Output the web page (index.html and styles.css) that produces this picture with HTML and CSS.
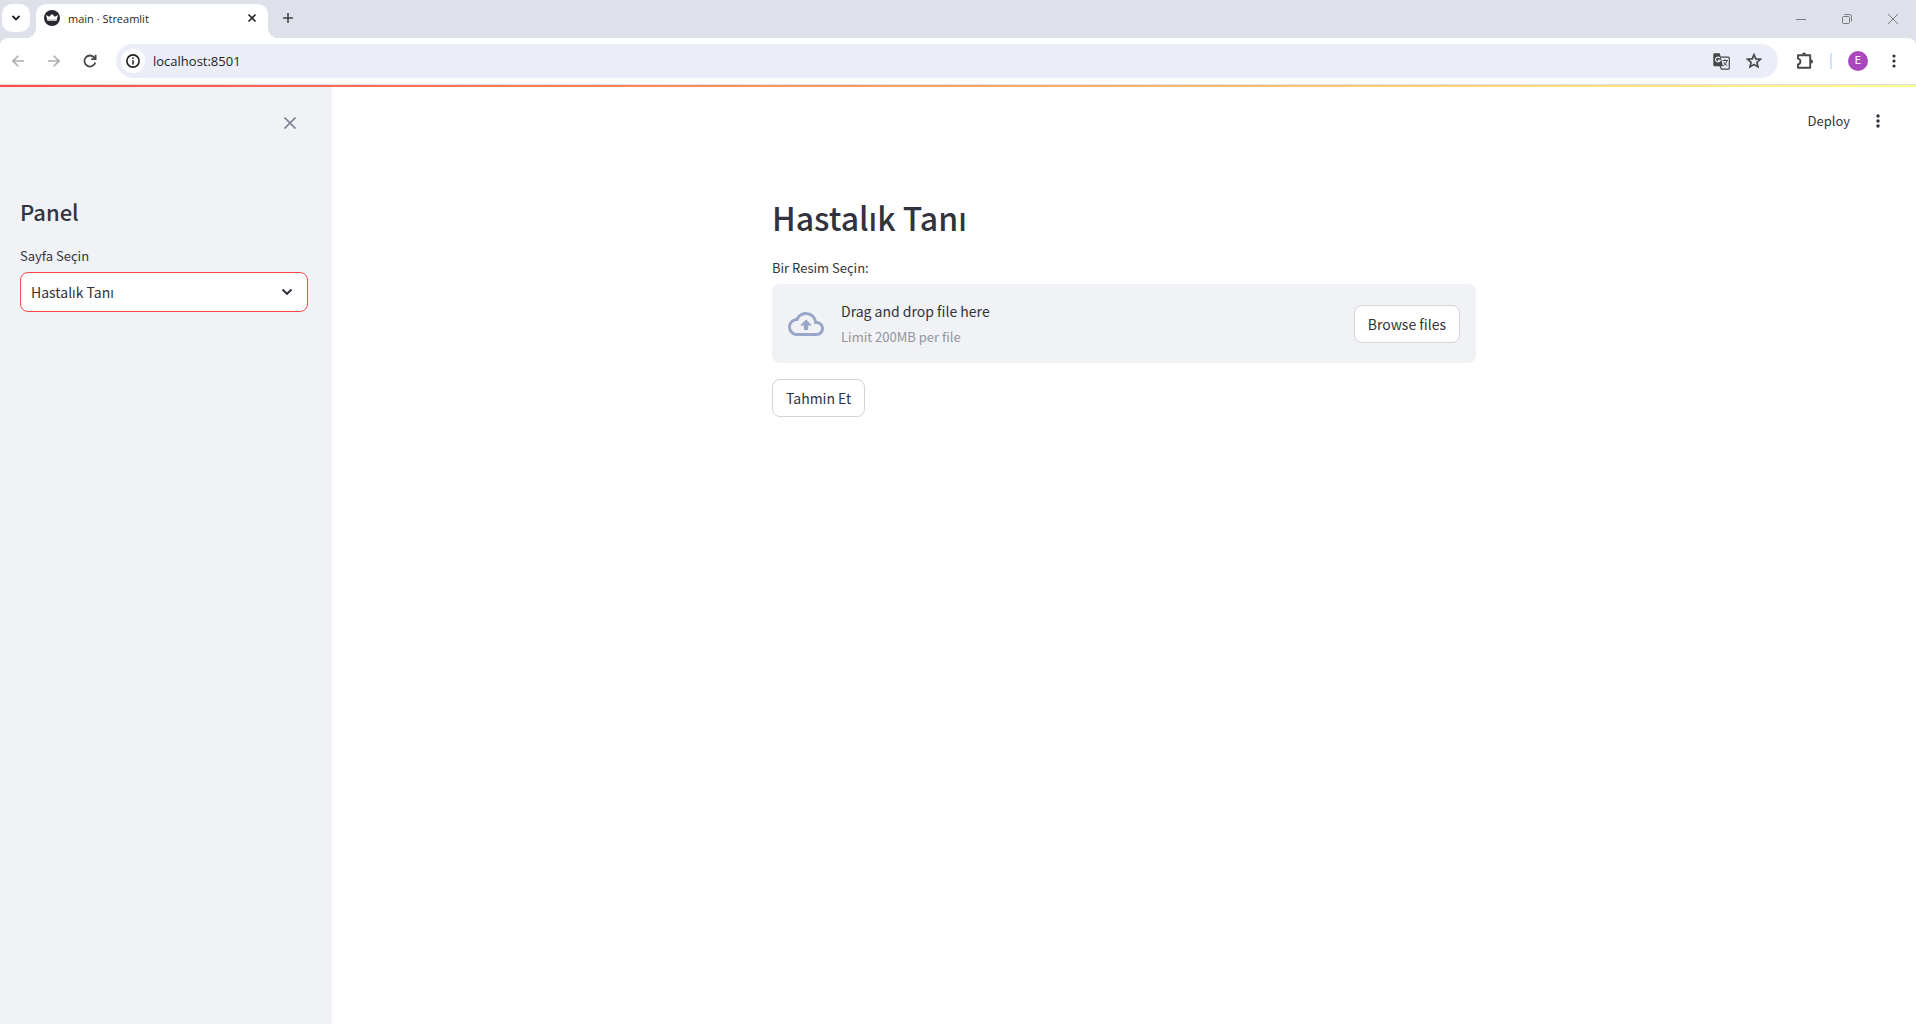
FILE: index.html
```html
<!DOCTYPE html>
<html lang="tr">
<head>
<meta charset="utf-8">
<title>main · Streamlit</title>
<link rel="stylesheet" href="styles.css">
</head>
<body>
<div class="browser">
  <div class="tab-strip">
    <button class="tab-search" aria-label="Search tabs">
      <svg width="10" height="10" viewBox="0 0 10 10"><path d="M1.500 3l3.500 3.500L8.500 3" fill="none" stroke="#1f1f1f" stroke-width="1.800"/></svg>
    </button>
    <div class="tab">
      <svg width="16" height="16" viewBox="0 0 16 16"><circle cx="8" cy="8" r="8" fill="#262730"/><path d="M2 5l3.200 1.700L8 4l2.800 2.700L14 5l-1.700 6H3.700z" fill="#fff"/><path d="M3.300 9.200h9.400l-.4 1.800H3.700z" fill="#c4c4c8"/></svg>
      <span class="tab-title">main · Streamlit</span>
      <button class="plain tab-close" aria-label="Close tab">
        <svg width="10" height="10" viewBox="0 0 10 10"><path d="M1.500 1.500l7 7M8.500 1.500l-7 7" stroke="#1f1f1f" stroke-width="1.600"/></svg>
      </button>
    </div>
    <button class="plain new-tab" aria-label="New tab">
      <svg width="12" height="12" viewBox="0 0 12 12"><path d="M6 1v10M1 6h10" stroke="#474747" stroke-width="1.600"/></svg>
    </button>
    <div class="window-controls">
      <button class="plain" aria-label="Minimize"><svg width="10" height="10" viewBox="0 0 10 10"><path d="M0 5.500h10" stroke="#777a7f"/></svg></button>
      <button class="plain" aria-label="Restore"><svg width="10" height="10" viewBox="0 0 10 10" fill="none" stroke="#777a7f"><rect x=".5" y="2.500" width="7" height="7" rx="1"/><path d="M2.500.5h5a2 2 0 0 1 2 2v5"/></svg></button>
      <button class="plain" aria-label="Close"><svg width="10" height="10" viewBox="0 0 10 10"><path d="M0 0l10 10M10 0L0 10" stroke="#777a7f"/></svg></button>
    </div>
  </div>
  <div class="toolbar-wrap">
  <div class="toolbar">
    <button class="plain nav" aria-label="Back"><svg width="12" height="12" viewBox="0 0 12 12" fill="none" stroke="#aeaeae" stroke-width="1.600"><path d="M12 6H1M6.300.700L1 6l5.300 5.300"/></svg></button>
    <button class="plain nav" aria-label="Forward"><svg width="12" height="12" viewBox="0 0 12 12" fill="none" stroke="#aeaeae" stroke-width="1.600"><path d="M0 6h11M5.700.700L11 6l-5.300 5.300"/></svg></button>
    <button class="plain nav" aria-label="Reload"><svg width="14" height="14" viewBox="0 0 14 14" fill="none" stroke="#474747" stroke-width="1.800"><path d="M12.300 8.400A5.500 5.500 0 1 1 11.300 3.600L12.500 5M12.600.7V5.200H8.200"/></svg></button>
    <div class="address">
      <button class="site-info" aria-label="View site information"><svg width="14" height="14" viewBox="0 0 14 14"><circle cx="7" cy="7" r="6.100" fill="none" stroke="#1f1f1f" stroke-width="1.600"/><path d="M7 6.200v4.300M7 3.500v1.500" stroke="#1f1f1f" stroke-width="1.500"/></svg></button>
      <input class="url" type="text" value="localhost:8501" aria-label="Address">
      <button class="plain" aria-label="Translate this page"><svg width="17" height="17" viewBox="0 0 17 17"><path d="M7 4.100h8.400a.9.900 0 0 1 .9.900v10.300a.9.900 0 0 1-.9.900H8.500L7 13" fill="none" stroke="#474747" stroke-width="1.200"/><path d="M1.300.2h5.500L10 13.200H1.300a1 1 0 0 1-1-1V1.200a1 1 0 0 1 1-1z" fill="#474747"/><path d="M6.900 5.100A2.400 2.400 0 1 0 7.200 7.300H5" fill="none" stroke="#ebeef8" stroke-width="1.200"/><path d="M9.500 7.500H15M12 6.300v1.200M14 7.500c-.4 2.300-1.700 3.900-3.800 5.200M10.600 9c.8 1.700 2 2.800 3.600 3.700" fill="none" stroke="#474747"/></svg></button>
      <button class="plain" aria-label="Bookmark this tab"><svg width="16" height="16" viewBox="0 0 16 16"><path d="M8 1.600l1.800 4.300 4.700.4-3.600 3 1.100 4.600L8 11.500l-4 2.400 1.100-4.600-3.600-3 4.700-.4z" fill="none" stroke="#474747" stroke-width="1.600"/></svg></button>
    </div>
    <div class="actions">
      <button class="plain" aria-label="Extensions"><svg width="18" height="18" viewBox="0 0 18 18"><path d="M2 3.200h12.200v12.600H2v-3.400c3.200-.4 3.200-5.400 0-5.800z" fill="none" stroke="#474747" stroke-width="1.900" stroke-linejoin="round"/><path d="M6.100 2.600a2 2 0 0 1 4 0zM15 7.500a2 2 0 0 1 0 4z" fill="#474747"/></svg></button>
      <span class="divider"></span>
      <button class="avatar" aria-label="Profile">E</button>
      <button class="plain" aria-label="Browser menu"><svg width="4" height="14" viewBox="0 0 4 14" fill="#333"><circle cx="2" cy="2" r="1.600"/><circle cx="2" cy="7" r="1.600"/><circle cx="2" cy="12" r="1.600"/></svg></button>
    </div>
  </div>
  </div>
  <div class="rainbow"></div>
  <div class="app">
    <aside class="sidebar">
      <button class="plain sidebar-close" aria-label="Close sidebar"><svg width="12" height="12" viewBox="0 0 12 12"><path d="M.5.5l11 11M11.500.5l-11 11" stroke="#808495" stroke-width="1.700"/></svg></button>
      <h2>Panel</h2>
      <label class="label" for="page">Sayfa Seçin</label>
      <div class="select">
        <select id="page"><option>Hastalık Tanı</option></select>
        <svg class="chevron" width="12" height="8" viewBox="0 0 12 8"><path d="M1.500 1.500L6 5.800l4.500-4.300" fill="none" stroke="#31333f" stroke-width="2"/></svg>
      </div>
    </aside>
    <main>
      <header class="app-header">
        <button class="plain deploy">Deploy</button>
        <button class="plain" aria-label="Main menu"><svg width="4" height="14" viewBox="0 0 4 14" fill="#31333f"><circle cx="2" cy="2" r="1.700"/><circle cx="2" cy="7" r="1.700"/><circle cx="2" cy="12" r="1.700"/></svg></button>
      </header>
      <section class="content">
        <h1>Hastalık Tanı</h1>
        <label class="label" for="browse">Bir Resim Seçin:</label>
        <div class="dropzone">
          <svg width="36" height="36" viewBox="0 0 24 24" fill="#98a6c8"><path d="M19.350 10.040A7.490 7.490 0 0 0 12 4C9.110 4 6.600 5.640 5.350 8.040A5.994 5.994 0 0 0 0 14c0 3.310 2.690 6 6 6h13c2.760 0 5-2.240 5-5 0-2.640-2.050-4.780-4.650-4.960zM19 18H6c-2.210 0-4-1.790-4-4s1.790-4 4-4h.710A5.502 5.502 0 0 1 12 6c3.040 0 5.500 2.460 5.500 5.500v.5H19c1.660 0 3 1.340 3 3s-1.340 3-3 3zM8 13h2.550v3h2.900v-3H16l-4-4z"/></svg>
          <div class="hint"><span>Drag and drop file here</span><small>Limit 200MB per file</small></div>
          <button class="button" id="browse">Browse files</button>
        </div>
        <button class="button">Tahmin Et</button>
      </section>
    </main>
  </div>
</div>
</body>
</html>
```

FILE: styles.css
```css
* { box-sizing: border-box; }
body { margin: 0; color: #31333f; background: #fff; font: 400 14px/24px "Noto Sans CJK SC", "Noto Sans", sans-serif; }
button, input, select { font: inherit; color: inherit; margin: 0; padding: 0; border: 0; }
button { display: flex; align-items: center; justify-content: center; }
svg { display: block; flex: none; }
.plain { background: none; }
.browser { display: flex; flex-direction: column; min-height: 100vh; }

.tab-strip { display: flex; align-items: center; height: 38px; padding-left: 2px; background: #dee1e9; font: 11px/16px "Open Sans", sans-serif; }
.tab-search { width: 28px; height: 28px; margin-bottom: 2px; border-radius: 10px; background: #fff; }
.tab { position: relative; display: flex; align-items: center; gap: 8px; align-self: flex-end; width: 232px; height: 34px; margin-left: 6px; padding: 0 10px 6px 8px; background: #fff; border-radius: 10px 10px 0 0; color: #1f1f1f; }
.tab::before, .tab::after { content: ""; position: absolute; bottom: 0; width: 10px; height: 10px; }
.tab::before { right: 100%; background: radial-gradient(circle at 0 0, transparent 10px, #fff 10px); }
.tab::after { left: 100%; background: radial-gradient(circle at 100% 0, transparent 10px, #fff 10px); }
.tab-title { flex: 1; padding-top: 2px; }
.tab-close { width: 12px; height: 16px; }
.new-tab { width: 28px; height: 28px; margin: 0 0 2px 6px; }
.window-controls { display: flex; margin-left: auto; }
.window-controls button { width: 46px; height: 36px; }

.toolbar-wrap { background: #dee1e9; }
.toolbar { display: flex; align-items: center; height: 47px; padding-right: 20px; background: #fff; border-bottom: 1px solid #dcdfe3; border-radius: 8px 8px 0 0; }
.nav { width: 36px; height: 34px; }
.address { display: flex; align-items: center; flex: 1; gap: 16px; height: 34px; margin-left: 8px; padding: 0 16px 0 5px; border-radius: 17px; background: #ebeef8; color: #1f1f1f; }
.site-info { width: 24px; height: 24px; border-radius: 50%; background: #fff; }
.url { flex: 1; min-width: 0; margin-left: -8px; background: none; outline: 0; font: 13px/20px "Open Sans", sans-serif; }
.actions { display: flex; align-items: center; gap: 16px; margin-left: 18px; }
.divider { width: 2px; height: 16px; background: #d3e3fd; }
.avatar { width: 20px; height: 20px; border-radius: 50%; background: #ab47bc; color: #fff; font: 11px/20px Roboto, sans-serif; }
.actions .avatar { margin-right: 8px; }

.rainbow { height: 2px; background: linear-gradient(90deg, #ff4b4b, #fffd80); }
.app { display: flex; flex: 1; }
.sidebar { width: 332px; padding: 26px 24px 0 20px; background: #f0f2f6; }
.sidebar-close { width: 20px; height: 20px; margin-left: auto; margin-right: 8px; }
h1, h2 { margin: 0; font-weight: 500; }
h2 { margin-top: 64px; font-size: 22px; line-height: 28px; }
.label { display: block; font-size: 13px; line-height: 20px; }
.sidebar .label { margin: 21px 0 6px; }
.select { position: relative; }
.select select { width: 100%; height: 40px; padding: 0 10px; appearance: none; border: 1px solid #ff4b4b; border-radius: 8px; background: #fff; }
.chevron { position: absolute; right: 15px; top: 16px; pointer-events: none; }

main { flex: 1; }
.app-header { display: flex; align-items: center; justify-content: flex-end; gap: 26px; height: 68px; padding-right: 36px; }
.deploy { font-size: 13px; }
.content { max-width: 704px; margin: 38px auto 0; }
h1 { font-size: 32px; line-height: 48px; }
.content .label { margin: 17px 0 6px; }
.dropzone { display: flex; align-items: center; gap: 17px; height: 79px; margin-bottom: 16px; padding: 0 16px; border-radius: 8px; background: #f0f2f6; }
.hint { display: flex; flex-direction: column; flex: 1; gap: 2px; }
.hint small { color: #94959c; font-size: 13px; }
.button { height: 38px; padding: 0 13px; border: 1px solid #d3d4d8; border-radius: 8px; background: #fff; }
```
